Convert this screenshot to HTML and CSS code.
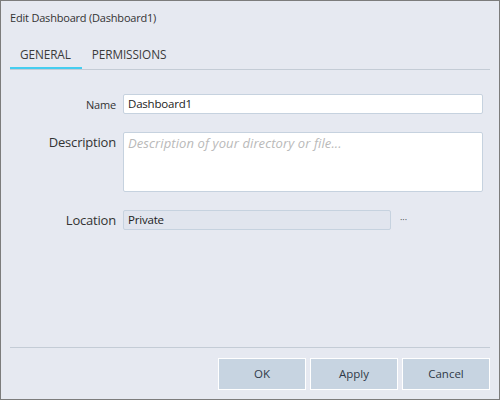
FILE: index.html
```html
<!DOCTYPE html>
<html>
<head>
<meta charset="utf-8">
<link rel="stylesheet" href="styles.css">
</head>
<body>
<div class="dialog">
  <div class="title">Edit Dashboard (Dashboard1)</div>
  <div class="tabs">
    <div class="tab active">GENERAL</div>
    <div class="tab">PERMISSIONS</div>
  </div>
  <div class="form">
    <div class="row">
      <label class="label small">Name</label>
      <div class="input">Dashboard1</div>
    </div>
    <div class="row top">
      <label class="label">Description</label>
      <div class="input area placeholder">Description of your directory or file...</div>
    </div>
    <div class="row">
      <label class="label">Location</label>
      <div class="input readonly">Private</div>
      <span class="dots">···</span>
    </div>
  </div>
  <div class="footer">
    <button class="btn">OK</button>
    <button class="btn">Apply</button>
    <button class="btn">Cancel</button>
  </div>
</div>
</body>
</html>
```
FILE: styles.css
```css
html, body {
  margin: 0;
  padding: 0;
}
body {
  font-family: "Open Sans", "Noto Sans", sans-serif;
  color: #2b2b2b;
}
.dialog {
  width: 500px;
  height: 400px;
  box-sizing: border-box;
  border: 1px solid #7c7c7c;
  background: #e6e9f1;
  display: flex;
  flex-direction: column;
  padding: 0 9px 0 9px;
}
.title {
  font-size: 11px;
  color: #333;
  padding-top: 9px;
  height: 26px;
  letter-spacing: -0.2px;
}
.tabs {
  display: flex;
  margin-top: 8px;
  border-bottom: 1px solid #c4ccd6;
}
.tab {
  font-size: 11.8px;
  color: #3a3a3a;
  padding: 0 10px;
  height: 25px;
  box-sizing: border-box;
  line-height: 21px;
  border-bottom: 2px solid transparent;
  letter-spacing: -0.1px;
}
.tab.active {
  border-bottom-color: #45cdf0;
  padding-right: 11px;
}
.form {
  display: flex;
  flex-direction: column;
  gap: 18px;
  margin-top: 24px;
  flex: 1;
}
.row {
  display: flex;
  align-items: center;
}
.row.top {
  align-items: flex-start;
}
.label {
  width: 106px;
  text-align: right;
  font-size: 13px;
  color: #333;
  padding-right: 7px;
  letter-spacing: -0.2px;
}
.label.small {
  font-size: 11px;
}
.row.top .label {
  margin-top: 1px;
}
.input {
  width: 360px;
  height: 20px;
  box-sizing: border-box;
  border: 1px solid #c6d2df;
  border-radius: 2px;
  background: #fff;
  font-size: 11.5px;
  line-height: 18px;
  padding: 0 4px;
  color: #222;
  letter-spacing: -0.2px;
}
.input.area {
  height: 60px;
}
.placeholder {
  color: #b9b9b9;
  font-style: italic;
  font-size: 13px;
  letter-spacing: 0.1px;
  line-height: 20px;
}
.input.readonly {
  width: 268px;
  background: #e1e5ee;
}
.dots {
  font-size: 9px;
  margin-left: 9px;
  color: #444;
  line-height: 10px;
}
.footer {
  border-top: 1px solid #c4ccd6;
  display: flex;
  justify-content: flex-end;
  gap: 4px;
  padding-top: 10px;
  height: 52px;
  box-sizing: border-box;
}
.btn {
  width: 88px;
  height: 32px;
  background: #c7d4e1;
  border: 1px solid #fff;
  font-family: inherit;
  font-size: 11.5px;
  color: #2f3a48;
  padding: 0 0 2px;
}
```
